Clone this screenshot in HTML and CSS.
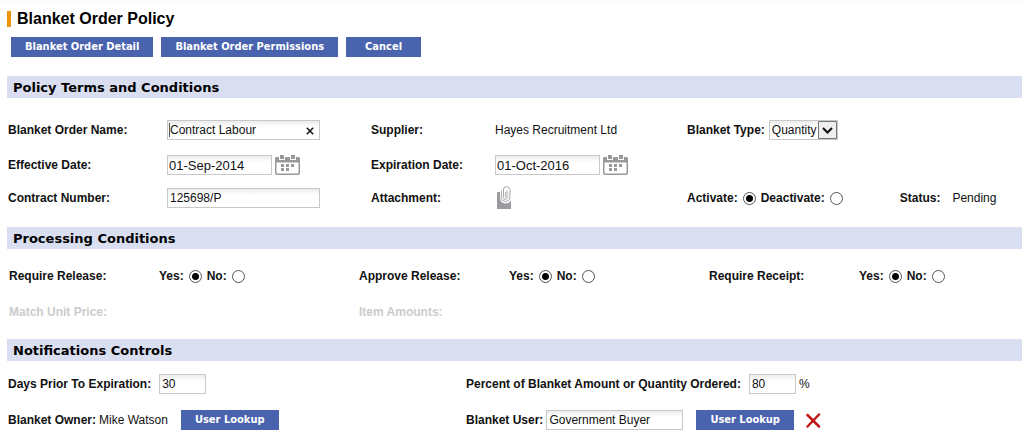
FILE: index.html
```html
<!DOCTYPE html>
<html lang="en">
<head>
<meta charset="utf-8">
<title>Blanket Order Policy</title>
<link rel="stylesheet" href="styles.css">
</head>
<body>
<svg class="defs" width="0" height="0" aria-hidden="true">
  <symbol id="calendar" viewBox="0 0 25 20">
    <path fill="#999" fill-rule="evenodd" d="M0 3.500Q0 2 1.500 2H4V5H10V2H15V5H21V2H23.500Q25 2 25 3.500V18Q25 20 23 20H2Q0 20 0 18ZM1.500 7.500V17.700Q1.500 18.500 2.300 18.500H22.700Q23.500 18.500 23.500 17.700V7.500Z"/>
    <path fill="#999" d="M5 0H9V4H5ZM16 0H20V4H16ZM6 9H9V12H6ZM11 9H14V12H11ZM16 9H19V12H16ZM6 13H9V16H6ZM11 13H14V16H11Z"/>
  </symbol>
</svg>
<header class="top">
  <h1 class="title">Blanket Order Policy</h1>
  <nav class="toolbar">
    <button class="btn" type="button">Blanket Order Detail</button>
    <button class="btn" type="button">Blanket Order Permissions</button>
    <button class="btn" type="button">Cancel</button>
  </nav>
</header>
<main class="sections">
  <section>
    <h2 class="bar">Policy Terms and Conditions</h2>
    <div class="terms">
      <label class="label" for="name">Blanket Order Name:</label>
      <div class="clearable">
        <input class="field" id="name" type="text" value="Contract Labour">
        <span class="caret"></span>
        <button class="clear" type="button" aria-label="Clear"><svg width="8" height="8" viewBox="0 0 8 8"><path d="M.8.8 7.200 7.200M7.200.8.8 7.200" stroke="#111" stroke-width="1.500"/></svg></button>
      </div>
      <span class="label">Supplier:</span>
      <span>Hayes Recruitment Ltd</span>
      <div class="inline type">
        <label class="label" for="type">Blanket Type:</label>
        <span class="select">
          <select class="field" id="type"><option>Quantity</option></select>
          <svg class="arrow" width="19" height="18" viewBox="0 0 19 18"><path fill="#eee" stroke="#777" d="M.5.500H18.500V17.500H.5Z"/><path d="M5 7 9.500 11.500 14 7" fill="none" stroke="#111" stroke-width="2"/></svg>
        </span>
      </div>

      <label class="label" for="start">Effective Date:</label>
      <div class="inline">
        <input class="field date" id="start" type="text" value="01-Sep-2014">
        <button class="icon" type="button" aria-label="Pick effective date"><svg width="25" height="20"><use href="#calendar"/></svg></button>
      </div>
      <label class="label" for="end">Expiration Date:</label>
      <div class="inline wide">
        <input class="field date" id="end" type="text" value="01-Oct-2016">
        <button class="icon" type="button" aria-label="Pick expiration date"><svg width="25" height="20"><use href="#calendar"/></svg></button>
      </div>

      <label class="label" for="contract">Contract Number:</label>
      <div><input class="field long" id="contract" type="text" value="125698/P"></div>
      <span class="label">Attachment:</span>
      <button class="icon clip" type="button" aria-label="Attachment"><svg width="17" height="24" viewBox="0 0 17 24"><path fill="#9b9b9f" d="M2 6H16V23H2Z"/><path d="M6.500 4.500V12Q6.500 16 10.500 16T15 12V4Q15 .7 11.500 .7T8.500 4V11.500Q8.500 13.500 10.200 13.500T12 11.500V4.500" fill="none" stroke="#fff" stroke-width="2.800"/><path d="M6.500 4.500V12Q6.500 15.500 10.500 15.500T15 12V4Q15 .7 11.500 .7T8.500 4V11.500Q8.500 13.500 10.200 13.500T12 11.500V4.500" fill="none" stroke="#aaa"/></svg></button>
      <div class="inline">
        <div class="radios">
          <label class="label" for="on">Activate:</label><input class="radio" id="on" type="radio" name="active" checked>
          <label class="label" for="off">Deactivate:</label><input class="radio" id="off" type="radio" name="active">
        </div>
        <div class="status"><span class="label">Status:</span><span>Pending</span></div>
      </div>
    </div>
  </section>

  <section>
    <h2 class="bar">Processing Conditions</h2>
    <div class="processing">
      <span class="label">Require Release:</span>
      <div class="radios">
        <label class="label" for="rel-y">Yes:</label><input class="radio" id="rel-y" type="radio" name="rel" checked>
        <label class="label" for="rel-n">No:</label><input class="radio" id="rel-n" type="radio" name="rel">
      </div>
      <span class="label">Approve Release:</span>
      <div class="radios">
        <label class="label" for="app-y">Yes:</label><input class="radio" id="app-y" type="radio" name="app" checked>
        <label class="label" for="app-n">No:</label><input class="radio" id="app-n" type="radio" name="app">
      </div>
      <span class="label">Require Receipt:</span>
      <div class="radios">
        <label class="label" for="rec-y">Yes:</label><input class="radio" id="rec-y" type="radio" name="rec" checked>
        <label class="label" for="rec-n">No:</label><input class="radio" id="rec-n" type="radio" name="rec">
      </div>
      <span class="label off pair">Match Unit Price:</span>
      <span class="label off pair">Item Amounts:</span>
    </div>
  </section>

  <section>
    <h2 class="bar">Notifications Controls</h2>
    <div class="notify">
      <div class="inline">
        <label class="label" for="days">Days Prior To Expiration:</label>
        <input class="field short" id="days" type="text" value="30">
      </div>
      <div class="inline">
        <label class="label" for="percent">Percent of Blanket Amount or Quantity Ordered:</label>
        <input class="field short" id="percent" type="text" value="80">
        <span>%</span>
      </div>
      <div class="inline">
        <span class="label">Blanket Owner:</span>
        <span>Mike Watson</span>
        <button class="btn lookup" type="button">User Lookup</button>
      </div>
      <div class="inline">
        <label class="label" for="user">Blanket User:</label>
        <input class="field user" id="user" type="text" value="Government Buyer">
        <button class="btn lookup" type="button">User Lookup</button>
        <button class="icon remove" type="button" aria-label="Remove user"><svg width="15" height="15" viewBox="0 0 15 15"><path d="M1.500 2 13 13.500M13 1.500 1.500 13.500" fill="none" stroke="#c01818" stroke-width="2.500" stroke-linecap="round"/></svg></button>
      </div>
    </div>
  </section>
</main>
</body>
</html>
```

FILE: styles.css
```css
* { box-sizing: border-box; }
body {
  margin: 0;
  background: #fff;
  color: #111;
  font: 12px/16px "Liberation Sans", Arial, sans-serif;
}
.defs { position: absolute; }
svg { display: block; }
button, input, select { font: inherit; color: inherit; margin: 0; }

.top { padding: 11px 7px 0; background: linear-gradient(#fafafa, #fff 4px); }
.title {
  margin: 0;
  padding-left: 6px;
  border-left: 4px solid #ee9408;
  font-size: 16px;
  line-height: 16px;
  color: #000;
}
.toolbar { display: flex; gap: 8px; padding: 10px 4px 0; }
.btn {
  height: 20px;
  min-width: 75px;
  padding: 0 14px;
  border: 0;
  background: #4a63ae;
  color: #fff;
  font: bold 11px/20px "DejaVu Sans Condensed", Tahoma, sans-serif;
  white-space: nowrap;
}

.sections { padding-top: 19px; }
.bar {
  margin: 0 0 0 7px;
  padding: 0 6px;
  background: #d9def0;
  color: #000;
  font: bold 13px/24px "DejaVu Sans", Verdana, sans-serif;
  height: 22px;
}
.label { font-weight: bold; white-space: nowrap; }
.off { color: #ccc; }

.terms, .processing, .notify { display: grid; align-items: center; }
.terms {
  grid-template-columns: 159fr 204fr 124fr 192fr 335fr;
  grid-template-rows: 36px 34px 32px;
  padding: 14px 0 13px 8px;
}
.processing {
  grid-template-columns: 150fr 200fr 150fr 200fr 150fr 163fr;
  grid-auto-rows: 36px;
  padding: 9px 0 9px 9px;
}
.pair { grid-column: span 2; }
.notify {
  grid-template-columns: 458fr 556fr;
  grid-auto-rows: 36px;
  padding: 5px 0 7px 8px;
}
.inline, .radios, .status { display: flex; align-items: center; gap: 3px; }
.type { gap: 4px; }
.wide { grid-column: span 2; }
.radios { gap: 5px; }
.status { gap: 12px; margin-left: 54px; }

.field {
  height: 20px;
  padding: 0 2px;
  border: 1px solid #c8c8c8;
  border-radius: 0;
  outline: 0;
  background: linear-gradient(#ececec, #fff 6px);
}
.clearable { position: relative; width: 153px; }
.clearable .field { display: block; width: 100%; padding-right: 18px; }
.caret { position: absolute; left: 2px; top: 3px; width: 1px; height: 14px; background: #555; }
.clear { position: absolute; right: 2px; top: 3px; padding: 4px; border: 0; background: none; }
.long { width: 153px; }
.date { width: 105px; padding: 0 1px; font-size: 13px; }
.short { width: 47px; margin-left: 5px; }
.user { width: 137px; }
.lookup { margin-left: 10px; }
.remove { margin-left: 9px; }
.icon { padding: 0; border: 0; background: none; }
.clip { justify-self: start; }

.select { position: relative; }
.select .field { display: block; width: 69px; appearance: none; }
.arrow { position: absolute; right: 1px; top: 1px; pointer-events: none; }

.radio {
  appearance: none;
  width: 13px;
  height: 13px;
  border: 1px solid #555;
  border-radius: 50%;
  background: #fff;
}
.radio:checked { background: radial-gradient(circle, #000 3px, #fff 4px); }
```
